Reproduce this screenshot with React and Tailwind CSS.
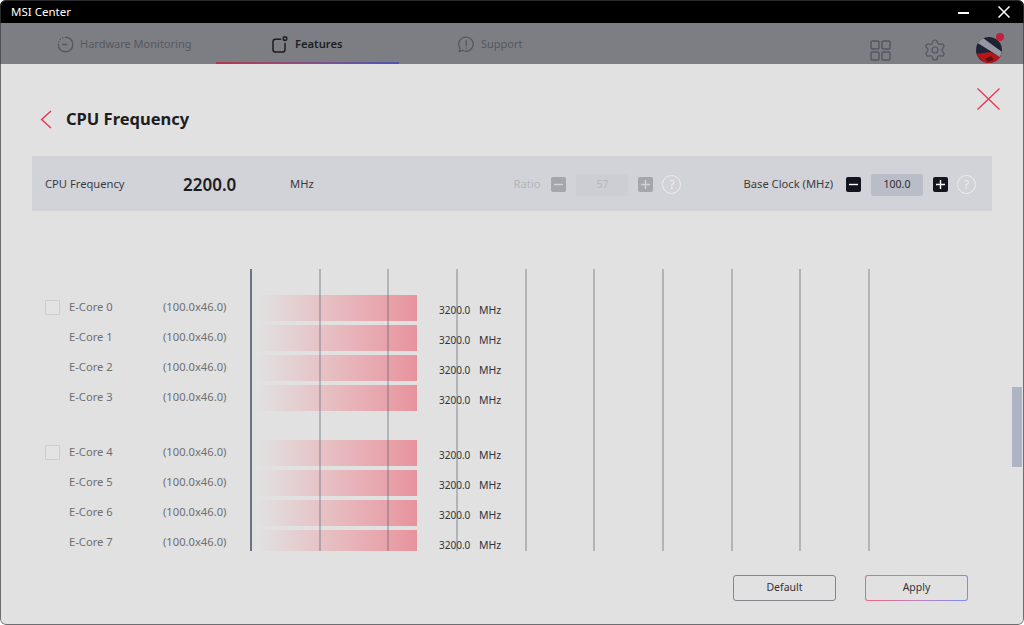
import { Settings } from 'lucide-react'

const groups = [
  [0, 1, 2, 3],
  [4, 5, 6, 7],
]

const gridLines = [0, 1, 2, 3, 4, 5, 6, 7, 8, 9]

function HardwareIcon() {
  return (
    <svg width="17" height="17" viewBox="0 0 17 17" fill="none" stroke="#56585f" strokeWidth="1.4" strokeLinecap="round">
      <path d="M8.5 1.2a7.3 7.3 0 1 1-7.3 7.3" />
      <path d="M1.6 5.9l.1-.1M3.3 3.4l.1-.1M5.7 1.8l.1-.1" />
      <path d="M5.6 8.5h4.2" />
    </svg>
  )
}

function FeaturesIcon() {
  return (
    <svg width="16" height="17" viewBox="0 0 16 17" fill="none" stroke="#1c1d22" strokeWidth="1.5">
      <path d="M8.5 3.2H3.6A2.6 2.6 0 0 0 1 5.8v7.6A2.6 2.6 0 0 0 3.6 16h6.8a2.6 2.6 0 0 0 2.6-2.6V7.5" strokeLinecap="round" />
      <circle cx="13" cy="2.6" r="1.8" />
    </svg>
  )
}

function SupportIcon() {
  return (
    <svg width="16" height="17" viewBox="0 0 16 17" fill="none" stroke="#56585f" strokeWidth="1.3" strokeLinecap="round" strokeLinejoin="round">
      <path d="M8.2 1.2a7 7 0 1 1-3.4 13.1L1.2 15.6l.9-3.3A7 7 0 0 1 8.2 1.2z" />
      <path d="M8.2 4.6v5" />
      <path d="M8.2 11.8v.2" />
    </svg>
  )
}

function AppsIcon() {
  return (
    <svg width="21" height="21" viewBox="0 0 21 21" fill="none" stroke="#53565f" strokeWidth="1.4">
      <rect x="1" y="1" width="8" height="8" rx="1.2" />
      <rect x="12" y="1" width="8" height="8" rx="1.2" />
      <rect x="1" y="12" width="8" height="8" rx="1.2" />
      <rect x="12" y="12" width="8" height="8" rx="1.2" />
    </svg>
  )
}

function Avatar() {
  return (
    <div className="relative w-[26px] h-[26px]">
      <svg width="26" height="26" viewBox="0 0 26 26">
        <defs>
          <clipPath id="avatarClip">
            <circle cx="13" cy="13" r="13" />
          </clipPath>
        </defs>
        <g clipPath="url(#avatarClip)">
          <rect width="26" height="26" fill="#1d2333" />
          <path d="M0 17L8 26H26V20L14 15Z" fill="#b5161c" />
          <path d="M0 5L7 1L26 15L24 20Z" fill="#b4b4bf" opacity="0.8" />
          <path d="M9 22l6-3 3 4-6 2z" fill="#5e1210" />
        </g>
      </svg>
      <span className="absolute -top-[4px] -right-[2px] w-[8px] h-[8px] rounded-full bg-[#c0213f]" />
    </div>
  )
}

function StepButton({ plus, dim }) {
  return (
    <span className={`w-[15px] h-[15px] rounded-[2px] flex items-center justify-center ${dim ? 'bg-[#a4a6ab]' : 'bg-[#14141f]'}`}>
      <svg width="9" height="9" viewBox="0 0 9 9" stroke={dim ? '#d2d3d8' : '#ffffff'} strokeWidth="1.4">
        <path d={plus ? 'M0 4.5h9M4.5 0v9' : 'M0 4.5h9'} />
      </svg>
    </span>
  )
}

function HelpButton() {
  return (
    <span className="w-[19px] h-[19px] rounded-full border-[1.5px] border-[#eeeef0] flex items-center justify-center text-[12px] leading-none text-[#eeeef0]">?</span>
  )
}

function CoreRow({ index, showCheck }) {
  return (
    <div className="flex items-center h-[26px] mb-[4px]">
      <div className="w-[37px] shrink-0 pl-[13px]">
        {showCheck && <div className="w-[15px] h-[15px] mb-[2px] border border-[#cdcdcd] bg-[#e3e3e3] rounded-[1px]" />}
      </div>
      <div className="w-[94px] shrink-0 pb-[1px] text-[#6e6f72]">E-Core {index}</div>
      <div className="w-[88px] shrink-0 pb-[1px] text-[#6e6f72]">(100.0x46.0)</div>
      <div className="w-[166px] h-[26px] shrink-0 bg-gradient-to-r from-[#e1e1e1] from-[4%] to-[#e7939e]" />
      <div className="w-[40px] ml-[22px] shrink-0 pt-[4px] text-[10px] text-[#33343a]">3200.0</div>
      <div className="pt-[5px] text-[10.5px] text-[#33343a]">MHz</div>
    </div>
  )
}

export default function App() {
  return (
    <div className="relative h-[625px] w-[1024px] flex flex-col overflow-hidden rounded-[6px] bg-[#e1e1e1] text-[11.2px] font-['Noto_Sans',sans-serif]">
      {/* title bar */}
      <div className="h-[23px] shrink-0 bg-black flex items-center justify-between pl-[11px] pr-[14px] text-white">
        <span className="text-[11.5px]">MSI Center</span>
        <div className="flex items-center gap-[29px]">
          <span className="w-[11px] h-[2px] bg-white mt-[3px]" />
          <svg width="12" height="12" viewBox="0 0 12 12" stroke="white" strokeWidth="1.5">
            <path d="M.5.5l11 11M11.5.5l-11 11" />
          </svg>
        </div>
      </div>

      {/* nav */}
      <div className="h-[41px] shrink-0 bg-[#7d7e83] flex items-stretch">
        <div className="w-[216px] pl-[57px] pt-[2px] flex items-center gap-[6px] text-[11px] text-[#56585f]">
          <HardwareIcon />
          <span>Hardware Monitoring</span>
        </div>
        <div className="relative w-[183px] pl-[56px] pt-[2px] flex items-center gap-[7px] font-semibold text-[#1c1d22]">
          <FeaturesIcon />
          <span>Features</span>
          <span className="absolute left-0 right-0 bottom-0 h-[2px] bg-gradient-to-r from-[#b8324f] to-[#4a55b4]" />
        </div>
        <div className="ml-[59px] pt-[2px] flex items-center gap-[7px] text-[11px] text-[#56585f]">
          <SupportIcon />
          <span>Support</span>
        </div>
        <div className="ml-auto pr-[22px] pt-[13px] flex items-center">
          <AppsIcon />
          <Settings size={24} strokeWidth={1.2} color="#53565f" className="ml-[32px]" />
          <div className="ml-[29px]"><Avatar /></div>
        </div>
      </div>

      {/* page */}
      <div className="relative flex-1 px-[32px] pt-[44px]">
        <div className="flex items-center h-[22px]">
          <svg width="12" height="19" viewBox="0 0 12 19" fill="none" stroke="#f0324f" strokeWidth="1.4" className="ml-[8px]">
            <path d="M11 1L1.6 9.5 11 18" />
          </svg>
          <h1 className="ml-[14px] text-[16.5px] font-bold text-[#1c1d22]">CPU Frequency</h1>
        </div>

        <div className="mt-[26px] h-[55px] bg-[#d2d3d8] flex items-center pl-[13px] pr-[16px] pt-[2px]">
          <span className="w-[138px] text-[#3a3b41]">CPU Frequency</span>
          <span className="w-[107px] text-[17px] font-semibold text-[#1c1d22]">2200.0</span>
          <span className="text-[#3a3b41]">MHz</span>
          <div className="ml-auto flex items-center">
            <span className="mr-[11px] text-[#b3b4b9]">Ratio</span>
            <StepButton dim />
            <span className="mx-[10px] w-[52px] h-[22px] rounded-[2px] bg-[#cdced3] flex items-center justify-center text-[10.5px] text-[#b6b7bc]">57</span>
            <StepButton plus dim />
            <span className="ml-[9px]"><HelpButton /></span>
            <span className="ml-[62px] mr-[13px] text-[#3a3b41]">Base Clock (MHz)</span>
            <StepButton />
            <span className="mx-[10px] w-[52px] h-[22px] rounded-[2px] bg-[#b9bdc7] flex items-center justify-center text-[10.5px] text-[#2c2d33]">100.0</span>
            <StepButton plus />
            <span className="ml-[9px]"><HelpButton /></span>
          </div>
        </div>

        {/* core chart */}
        <div className="relative mt-[58px] h-[282px] overflow-hidden pt-[26px]">
          {groups.map((group, i) => (
            <div key={i} className="mb-[29px]">
              {group.map((core, j) => (
                <CoreRow key={core} index={core} showCheck={j === 0} />
              ))}
            </div>
          ))}
          <div className="absolute inset-y-0 left-[218px] flex">
            {gridLines.map((n) => (
              <div key={n} className={`w-[68.67px] h-full border-l-2 ${n === 0 ? 'border-[#6b7280]' : 'border-[#5d616c]/35'}`} />
            ))}
          </div>
        </div>

        <div className="mt-[24px] mr-[24px] flex justify-end gap-[29px]">
          <button className="w-[103px] h-[26px] rounded-[3px] border-[1.5px] border-[#85878d] text-[10.5px] text-[#33343a]">Default</button>
          <div className="w-[103px] h-[26px] rounded-[3px] p-[1px] bg-gradient-to-r from-[#f0647f] to-[#8088f0]">
            <button className="w-full h-full rounded-[2px] bg-[#e1e1e1] text-[10.5px] text-[#33343a]">Apply</button>
          </div>
        </div>

        {/* close */}
        <svg width="23" height="22" viewBox="0 0 23 22" stroke="#f0324f" strokeWidth="1.3" className="absolute left-[977px] top-[24px]">
          <path d="M.5.5l22 21M22.5.5l-22 21" />
        </svg>

        {/* scrollbar */}
        <div className="absolute right-[2px] top-[323px] w-[10px] h-[80px] bg-[#aeb4c4]" />
      </div>

      <div className="pointer-events-none absolute inset-0 rounded-[6px] border border-[#3c3d42]/70" />
    </div>
  )
}
